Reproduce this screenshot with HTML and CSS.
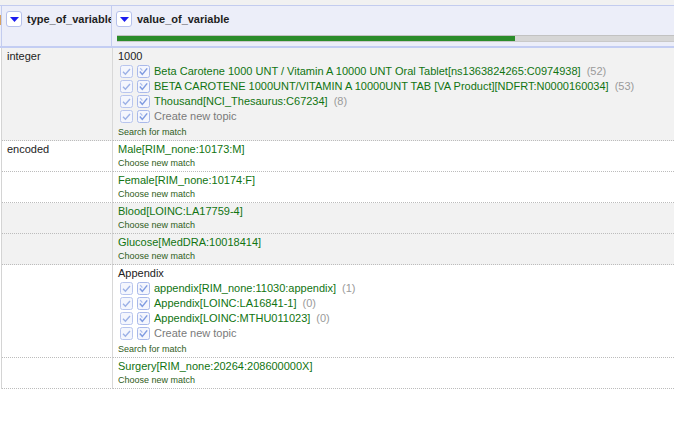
FILE: index.html
```html
<!DOCTYPE html>
<html>
<head>
<meta charset="utf-8">
<link rel="stylesheet" href="styles.css">
</head>
<body>
<div class="topstrip"></div>
<div class="grid">
  <div class="header">
    <div class="grip"><span class="grip-mark"></span></div>
    <div class="hcell hcell-type">
      <div class="hrow">
        <span class="dd"><svg width="9" height="5" viewBox="0 0 9 5"><path d="M0 0 L9 0 L4.5 5 Z" fill="#1c1cf0"/></svg></span>
        <span class="htext">type_of_variable</span>
      </div>
    </div>
    <div class="hcell hcell-value">
      <div class="hrow">
        <span class="dd"><svg width="9" height="5" viewBox="0 0 9 5"><path d="M0 0 L9 0 L4.5 5 Z" fill="#1c1cf0"/></svg></span>
        <span class="htext">value_of_variable</span>
      </div>
      <div class="bar"><div class="bar-fill" style="width:71.5%"></div></div>
    </div>
  </div>

  <div class="row gray">
    <div class="cell type">integer</div>
    <div class="cell value">
      <div class="title">1000</div>
      <div class="opt"><span class="cb"><svg width="13" height="13" viewBox="0 0 13 13"><rect x="0.5" y="0.5" width="12" height="12" rx="2" fill="#f4f6fd" stroke="#b8c5ee"/><path d="M3 6.8 L5.4 9.2 L10 4" fill="none" stroke="#9cb1e6" stroke-width="1.4"/></svg></span><span class="cb"><svg width="13" height="13" viewBox="0 0 13 13"><rect x="0.5" y="0.5" width="12" height="12" rx="2" fill="#f4f6fd" stroke="#a9b9ea"/><path d="M2.8 6.6 L5.3 9.4 L10.2 3.4" fill="none" stroke="#7f9be0" stroke-width="1.5"/><path d="M3.2 3.2 L5.4 5.6" fill="none" stroke="#a9bbec" stroke-width="1.2"/></svg></span><span class="match">Beta Carotene 1000 UNT / Vitamin A 10000 UNT Oral Tablet[ns1363824265:C0974938]</span><span class="count">(52)</span></div>
      <div class="opt"><span class="cb"><svg width="13" height="13" viewBox="0 0 13 13"><rect x="0.5" y="0.5" width="12" height="12" rx="2" fill="#f4f6fd" stroke="#b8c5ee"/><path d="M3 6.8 L5.4 9.2 L10 4" fill="none" stroke="#9cb1e6" stroke-width="1.4"/></svg></span><span class="cb"><svg width="13" height="13" viewBox="0 0 13 13"><rect x="0.5" y="0.5" width="12" height="12" rx="2" fill="#f4f6fd" stroke="#a9b9ea"/><path d="M2.8 6.6 L5.3 9.4 L10.2 3.4" fill="none" stroke="#7f9be0" stroke-width="1.5"/><path d="M3.2 3.2 L5.4 5.6" fill="none" stroke="#a9bbec" stroke-width="1.2"/></svg></span><span class="match">BETA CAROTENE 1000UNT/VITAMIN A 10000UNT TAB [VA Product][NDFRT:N0000160034]</span><span class="count">(53)</span></div>
      <div class="opt"><span class="cb"><svg width="13" height="13" viewBox="0 0 13 13"><rect x="0.5" y="0.5" width="12" height="12" rx="2" fill="#f4f6fd" stroke="#b8c5ee"/><path d="M3 6.8 L5.4 9.2 L10 4" fill="none" stroke="#9cb1e6" stroke-width="1.4"/></svg></span><span class="cb"><svg width="13" height="13" viewBox="0 0 13 13"><rect x="0.5" y="0.5" width="12" height="12" rx="2" fill="#f4f6fd" stroke="#a9b9ea"/><path d="M2.8 6.6 L5.3 9.4 L10.2 3.4" fill="none" stroke="#7f9be0" stroke-width="1.5"/><path d="M3.2 3.2 L5.4 5.6" fill="none" stroke="#a9bbec" stroke-width="1.2"/></svg></span><span class="match">Thousand[NCI_Thesaurus:C67234]</span><span class="count">(8)</span></div>
      <div class="opt"><span class="cb"><svg width="13" height="13" viewBox="0 0 13 13"><rect x="0.5" y="0.5" width="12" height="12" rx="2" fill="#f4f6fd" stroke="#b8c5ee"/><path d="M3 6.8 L5.4 9.2 L10 4" fill="none" stroke="#9cb1e6" stroke-width="1.4"/></svg></span><span class="cb"><svg width="13" height="13" viewBox="0 0 13 13"><rect x="0.5" y="0.5" width="12" height="12" rx="2" fill="#f4f6fd" stroke="#a9b9ea"/><path d="M2.8 6.6 L5.3 9.4 L10.2 3.4" fill="none" stroke="#7f9be0" stroke-width="1.5"/><path d="M3.2 3.2 L5.4 5.6" fill="none" stroke="#a9bbec" stroke-width="1.2"/></svg></span><span class="create">Create new topic</span></div>
      <div class="link">Search for match</div>
    </div>
  </div>

  <div class="row">
    <div class="cell type">encoded</div>
    <div class="cell value">
      <div class="title match">Male[RIM_none:10173:M]</div>
      <div class="link link-tight">Choose new match</div>
    </div>
  </div>

  <div class="row">
    <div class="cell type"></div>
    <div class="cell value">
      <div class="title match">Female[RIM_none:10174:F]</div>
      <div class="link link-tight">Choose new match</div>
    </div>
  </div>

  <div class="row gray">
    <div class="cell type"></div>
    <div class="cell value">
      <div class="title match">Blood[LOINC:LA17759-4]</div>
      <div class="link link-tight">Choose new match</div>
    </div>
  </div>

  <div class="row gray">
    <div class="cell type"></div>
    <div class="cell value">
      <div class="title match">Glucose[MedDRA:10018414]</div>
      <div class="link link-tight">Choose new match</div>
    </div>
  </div>

  <div class="row">
    <div class="cell type"></div>
    <div class="cell value">
      <div class="title">Appendix</div>
      <div class="opt"><span class="cb"><svg width="13" height="13" viewBox="0 0 13 13"><rect x="0.5" y="0.5" width="12" height="12" rx="2" fill="#f4f6fd" stroke="#b8c5ee"/><path d="M3 6.8 L5.4 9.2 L10 4" fill="none" stroke="#9cb1e6" stroke-width="1.4"/></svg></span><span class="cb"><svg width="13" height="13" viewBox="0 0 13 13"><rect x="0.5" y="0.5" width="12" height="12" rx="2" fill="#f4f6fd" stroke="#a9b9ea"/><path d="M2.8 6.6 L5.3 9.4 L10.2 3.4" fill="none" stroke="#7f9be0" stroke-width="1.5"/><path d="M3.2 3.2 L5.4 5.6" fill="none" stroke="#a9bbec" stroke-width="1.2"/></svg></span><span class="match">appendix[RIM_none:11030:appendix]</span><span class="count">(1)</span></div>
      <div class="opt"><span class="cb"><svg width="13" height="13" viewBox="0 0 13 13"><rect x="0.5" y="0.5" width="12" height="12" rx="2" fill="#f4f6fd" stroke="#b8c5ee"/><path d="M3 6.8 L5.4 9.2 L10 4" fill="none" stroke="#9cb1e6" stroke-width="1.4"/></svg></span><span class="cb"><svg width="13" height="13" viewBox="0 0 13 13"><rect x="0.5" y="0.5" width="12" height="12" rx="2" fill="#f4f6fd" stroke="#a9b9ea"/><path d="M2.8 6.6 L5.3 9.4 L10.2 3.4" fill="none" stroke="#7f9be0" stroke-width="1.5"/><path d="M3.2 3.2 L5.4 5.6" fill="none" stroke="#a9bbec" stroke-width="1.2"/></svg></span><span class="match">Appendix[LOINC:LA16841-1]</span><span class="count">(0)</span></div>
      <div class="opt"><span class="cb"><svg width="13" height="13" viewBox="0 0 13 13"><rect x="0.5" y="0.5" width="12" height="12" rx="2" fill="#f4f6fd" stroke="#b8c5ee"/><path d="M3 6.8 L5.4 9.2 L10 4" fill="none" stroke="#9cb1e6" stroke-width="1.4"/></svg></span><span class="cb"><svg width="13" height="13" viewBox="0 0 13 13"><rect x="0.5" y="0.5" width="12" height="12" rx="2" fill="#f4f6fd" stroke="#a9b9ea"/><path d="M2.8 6.6 L5.3 9.4 L10.2 3.4" fill="none" stroke="#7f9be0" stroke-width="1.5"/><path d="M3.2 3.2 L5.4 5.6" fill="none" stroke="#a9bbec" stroke-width="1.2"/></svg></span><span class="match">Appendix[LOINC:MTHU011023]</span><span class="count">(0)</span></div>
      <div class="opt"><span class="cb"><svg width="13" height="13" viewBox="0 0 13 13"><rect x="0.5" y="0.5" width="12" height="12" rx="2" fill="#f4f6fd" stroke="#b8c5ee"/><path d="M3 6.8 L5.4 9.2 L10 4" fill="none" stroke="#9cb1e6" stroke-width="1.4"/></svg></span><span class="cb"><svg width="13" height="13" viewBox="0 0 13 13"><rect x="0.5" y="0.5" width="12" height="12" rx="2" fill="#f4f6fd" stroke="#a9b9ea"/><path d="M2.8 6.6 L5.3 9.4 L10.2 3.4" fill="none" stroke="#7f9be0" stroke-width="1.5"/><path d="M3.2 3.2 L5.4 5.6" fill="none" stroke="#a9bbec" stroke-width="1.2"/></svg></span><span class="create">Create new topic</span></div>
      <div class="link">Search for match</div>
    </div>
  </div>

  <div class="row">
    <div class="cell type"></div>
    <div class="cell value">
      <div class="title match">Surgery[RIM_none:20264:208600000X]</div>
      <div class="link link-tight">Choose new match</div>
    </div>
  </div>
</div>
</body>
</html>
```

FILE: styles.css
```css
html, body {
  margin: 0;
  padding: 0;
  background: #ffffff;
  font-family: "Liberation Sans", Arial, sans-serif;
  color: #222222;
  overflow: hidden;
}

.topstrip {
  height: 5px;
  background: #f1f1f1;
}

.grid {
  display: flex;
  flex-direction: column;
  width: 100%;
}

.header {
  display: flex;
  height: 40px;
  background: #eceef9;
  border-top: 1px solid #c3ccef;
  border-bottom: 2px solid #c3cdf3;
}

.grip {
  width: 1px;
  display: flex;
  flex-direction: column;
  padding-top: 9px;
  background: #eceef9;
}

.grip-mark {
  display: block;
  width: 1px;
  height: 10px;
  background: #d8a260;
}

.hcell {
  display: flex;
  flex-direction: column;
  border-left: 1px solid #c3ccef;
  overflow: hidden;
  white-space: nowrap;
}

.hcell-type {
  width: 110px;
  padding-left: 4px;
  box-sizing: border-box;
}

.hcell-value {
  flex: 1;
  padding-left: 4px;
}

.hrow {
  display: flex;
  align-items: center;
  height: 16px;
  margin-top: 5px;
}

.dd {
  display: flex;
  align-items: center;
  justify-content: center;
  width: 14px;
  height: 14px;
  background: #ffffff;
  border: 1px solid #b6c1ec;
  border-radius: 3px;
  flex: none;
}

.htext {
  font-weight: bold;
  font-size: 11px;
  margin-left: 5px;
  color: #1e1e1e;
}

.bar {
  margin-top: 8px;
  margin-left: 1px;
  height: 5px;
  background: #d6d6d6;
  border-top: 1px solid #c2c2c2;
  border-bottom: 1px solid #c9c9c9;
  display: flex;
}

.bar-fill {
  height: 100%;
  background: #2b8c2b;
}

.row {
  display: flex;
  border-left: 1px solid #d4d4d4;
  margin-left: 1px;
  background: #ffffff;
}

.row.gray {
  background: #f2f2f2;
}

.cell {
  border-bottom: 1px dotted #bcbcbc;
  font-size: 11px;
  padding: 1px 5px 1px 5px;
  box-sizing: border-box;
}

.cell.type {
  width: 111px;
  flex: none;
  line-height: 15px;
  border-right: 1px solid #d8d8d8;
  padding-left: 5px;
}

.cell.value {
  flex: 1;
  display: flex;
  flex-direction: column;
  white-space: nowrap;
  overflow: hidden;
}

.title {
  line-height: 15px;
  height: 15px;
}

.match {
  color: #117411;
}

.opt {
  display: flex;
  align-items: center;
  height: 15px;
  line-height: 15px;
  padding-left: 2px;
}

.cb {
  display: flex;
  width: 13px;
  height: 13px;
  margin-right: 4px;
  flex: none;
}

.count {
  color: #9a9a9a;
  margin-left: 6px;
}

.create {
  color: #7a7a7a;
}

.link {
  font-size: 9px;
  line-height: 13px;
  height: 13px;
  color: #2f5d22;
  margin-top: 2px;
}

.link-tight {
  margin-top: 0;
}
```
